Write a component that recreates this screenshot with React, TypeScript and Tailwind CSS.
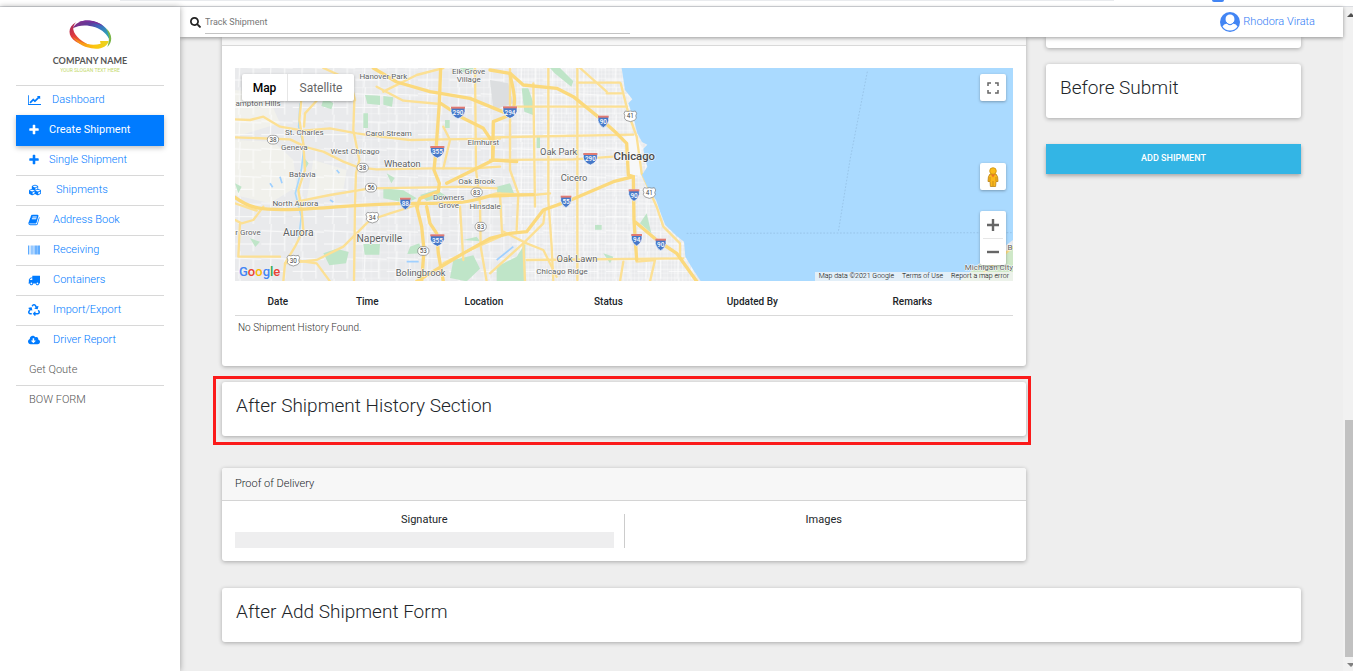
import type { ReactNode } from "react";
import { FaBarcode, FaCloudDownloadAlt, FaCubes, FaRecycle, FaSearch } from "react-icons/fa";

const PLUS =
  "M1600 736v192q0 40-28 68t-68 28h-416v416q0 40-28 68t-68 28h-192q-40 0-68-28t-28-68v-416h-416q-40 0-68-28t-28-68v-192q0-40 28-68t68-28h416v-416q0-40 28-68t68-28h192q40 0 68 28t28 68v416h416q40 0 68 28t28 68z";
const CHART =
  "M2048 1536v128h-2048v-1536h128v1408h1920zm-128-1248v435q0 21-19.5 29.5t-35.5-7.5l-121-121-633 633q-10 10-23 10t-23-10l-233-233-416 416-192-192 585-585q10-10 23-10t23 10l233 233 464-464-121-121q-16-16-7.5-35.5t29.5-19.5h435q14 0 23 9t9 23z";
const TRUCK =
  "M640 1408q0-52-38-90t-90-38-90 38-38 90 38 90 90 38 90-38 38-90zm-384-512h384v-256h-158q-13 0-22 9l-195 195q-9 9-9 22v30zm1280 512q0-52-38-90t-90-38-90 38-38 90 38 90 90 38 90-38 38-90zm256-1088v1024q0 15-4 26.5t-13.5 18.5-16.5 11.5-23.5 6-22.5 2-25.5 0-22.5-.5q0 106-75 181t-181 75-181-75-75-181h-384q0 106-75 181t-181 75-181-75-75-181h-64q-3 0-22.5.5t-25.5 0-22.5-2-23.5-6-16.5-11.5-13.5-18.5-4-26.5q0-26 19-45t45-19v-320q0-8-.5-35t0-38 2.5-34.5 6.5-37 14-30.5 22.5-30l198-198q19-19 50.5-32t58.5-13h160v-192q0-26 19-45t45-19h1024q26 0 45 19t19 45z";
const BOOK =
  "M1703 478q40 57 18 129l-275 906q-19 64-76.5 107.5t-122.5 43.5h-923q-77 0-148.5-53.5t-99.5-131.5q-24-67-2-127 0-4 3-27t4-37q1-8-3-21.5t-3-19.5q2-11 8-21t16.5-23.5 16.5-23.5q23-38 45-91.5t30-91.5q3-10 .5-30t-.5-28q3-11 17-28t17-23q21-36 42-92t25-90q1-9-2.5-32t.5-28q4-13 22-30.5t22-22.5q19-26 42.5-84.5t27.5-96.5q1-8-3-25.5t-2-26.5q2-8 9-18t18-23 17-21q8-12 16.5-30.5t15-35 16-36 19.5-32 26.5-23.5 36-11.5 47.5 5.5l-1 3q38-9 51-9h761q74 0 114 56t18 130l-274 906q-36 119-71.5 153.5t-128.5 34.5h-869q-27 0-38 15-11 16-1 43 24 70 144 70h923q29 0 56-15.5t35-41.5l300-987q7-22 5-57 38 15 59 43zm-1064 2q-4 13 2 22.5t20 9.5h608q13 0 25.5-9.5t16.5-22.5l21-64q4-13-2-22.5t-20-9.5h-608q-13 0-25.5 9.5t-16.5 22.5zm-83 256q-4 13 2 22.5t20 9.5h608q13 0 25.5-9.5t16.5-22.5l21-64q4-13-2-22.5t-20-9.5h-608q-13 0-25.5 9.5t-16.5 22.5z";

function Glyph({ d, wide }: { d: string; wide?: boolean }) {
  return (
    <svg viewBox={wide ? "0 0 2048 1792" : "0 0 1792 1792"} className={wide ? "h-3 w-[13px]" : "size-3"} fill="currentColor" aria-hidden="true">
      <path d={d} />
    </svg>
  );
}

type NavItem = { label: string; icon?: ReactNode; gap?: string; active?: boolean; line?: boolean };

const NAV: NavItem[] = [
  { label: "Dashboard", icon: <Glyph d={CHART} wide />, gap: "gap-[10px]" },
  { label: "Create Shipment", icon: <Glyph d={PLUS} />, gap: "gap-2", active: true },
  { label: "Single Shipment", icon: <Glyph d={PLUS} />, gap: "gap-2", line: true },
  { label: "Shipments", icon: <FaCubes className="h-3 w-[14px]" />, gap: "gap-[13px]", line: true },
  { label: "Address Book", icon: <Glyph d={BOOK} />, gap: "gap-3", line: true },
  { label: "Receiving", icon: <FaBarcode className="size-3" />, gap: "gap-3", line: true },
  { label: "Containers", icon: <Glyph d={TRUCK} />, gap: "gap-3", line: true },
  { label: "Import/Export", icon: <FaRecycle className="size-3" />, gap: "gap-3", line: true },
  { label: "Driver Report", icon: <FaCloudDownloadAlt className="size-3" />, gap: "gap-3" },
  { label: "Get Qoute", line: true },
  { label: "BOW FORM" },
];

function Logo() {
  return (
    <div className="flex flex-col items-center pt-3">
      <svg viewBox="68 10 132 93" className="h-[31px] w-11" aria-hidden="true">
        <defs>
          <linearGradient id="top" x1="0" x2="1" y2=".5">
            <stop offset="0" stopColor="#8e2a7c" />
            <stop offset=".45" stopColor="#5b3d9e" />
            <stop offset=".7" stopColor="#3a6fc0" />
            <stop offset="1" stopColor="#2f9fb4" />
          </linearGradient>
          <linearGradient id="left" x1="0" x2=".6" y2="1">
            <stop offset="0" stopColor="#9c2560" />
            <stop offset=".5" stopColor="#e03a3e" />
            <stop offset="1" stopColor="#f47b20" />
          </linearGradient>
          <linearGradient id="bottom" x1="0" x2="1">
            <stop offset="0" stopColor="#f47b20" />
            <stop offset=".6" stopColor="#fdc50f" />
            <stop offset="1" stopColor="#e8d520" />
          </linearGradient>
        </defs>
        <path d="M82 38C94 14 130 8 160 22C184 33 197 54 194 76C186 56 170 42 150 35C124 26 100 28 82 38z" fill="url(#top)" />
        <path d="M98 20C124 10 156 14 176 34C152 20 128 18 98 20z" fill="#7a2f9a" />
        <path d="M182 38C200 52 204 78 186 94C192 76 194 58 182 38z" fill="#7ab648" />
        <path d="M92 20C66 34 66 62 92 78C106 87 122 91 138 90C112 80 88 62 84 42C83 34 86 27 92 20z" fill="url(#left)" />
        <path d="M82 62C104 84 138 92 166 84L164 76L190 76C186 94 164 103 138 98C112 94 92 80 82 62z" fill="url(#bottom)" />
      </svg>
      <p className="mt-[5px] text-center font-[Lato,sans-serif] text-[9px] leading-3 font-bold text-[#555]">COMPANY NAME</p>
      <p className="text-center text-[5px] leading-[6px] text-[#c3d96a]">YOUR SLOGAN TEXT HERE</p>
    </div>
  );
}

function Sidebar() {
  return (
    <aside className="relative z-20 w-[180px] shrink-0 bg-white px-4 shadow-[0_0_6px_rgba(0,0,0,0.35)]">
      <div className="h-[78px]">
        <Logo />
      </div>
      <nav className="border-t border-[#d8d8d8]">
        {NAV.map((n) => (
          <a
            key={n.label}
            href="#"
            className={
              "flex items-center pb-[2px] pl-3 text-[11px] leading-4 " +
              (n.gap ?? "") +
              (n.active
                ? " h-[31px] bg-[#007bff] text-white shadow-[0_2px_5px_rgba(0,0,0,0.25)]"
                : n.label === "Dashboard"
                  ? " h-[29px] font-light text-[#007bff]"
                  : n.icon
                    ? " h-[30px] font-light text-[#007bff]"
                    : " h-[30px] font-light text-[#555]") +
              (n.line ? " border-b border-[#d8d8d8]" : "")
            }
          >
            {n.icon}
            <span className={n.icon ? "pl-px" : "pl-px"}>{n.label}</span>
          </a>
        ))}
      </nav>
    </aside>
  );
}

const MAJOR = [
  "M632 24L628 130 618 270 612 330 628 370 625 395 570 415 562 440",
  "M590 440L600 490 620 520 625 580 640 664",
  "M15 412C60 445 90 452 200 448S400 430 560 430 720 424 780 408L910 404",
  "M430 24L500 66 600 95 720 115 830 160",
  "M632 130L700 175 760 205 790 250 788 300 860 305",
  "M780 30L840 40 880 75 980 85 1030 110 1110 175 1160 220 1190 250 1195 345 1210 350",
  "M1210 350L1150 365 1010 425 940 450 890 515 840 520 780 535 700 580 560 664",
  "M1210 350L1212 480 1220 600M1215 485L1280 540 1340 580 1400 664",
  "M840 165L790 185 788 300M840 165C870 130 840 60 840 40",
  "M560 440L575 500 582 570 575 664M650 370L730 330 790 300",
];
const MINOR = [
  "M15 178L60 180 100 170 150 200 220 212 300 205 380 220 450 230 540 240 640 238 810 236",
  "M15 232L180 238 230 262 280 275 340 305 385 322 440 328 600 325 730 325 810 320",
  "M215 110L208 180 220 250 225 330 205 390 215 450 220 510 195 560 165 610 160 664",
  "M262 120L225 160 222 200M15 430L80 452",
  "M373 120L370 210 388 300 378 340 375 430 372 664",
  "M440 80L520 122 630 132M460 95L560 45 640 24M280 24L360 60 375 120",
  "M735 24L738 330 750 430 752 560 770 664",
  "M200 425L300 405 420 385 600 382 700 380 800 385",
  "M165 610L260 600 340 560 400 500 420 480 480 460 560 435",
  "M640 610L720 570 810 530M15 480L35 490 70 480 100 440M30 490L25 590 150 590M190 600L260 610 300 664",
  "M955 24V420L965 560 970 664M1042 24V660M910 70L915 440",
  "M860 140H1190M780 232L1210 224M1042 68H1170M1130 100H1175M1050 24L1130 95",
  "M780 300L1030 298 1150 290M730 420L800 400 910 405 960 400",
  "M1172 70L1195 160 1220 230 1235 340 1280 440 1300 500 1350 550 1350 590",
  "M890 600L1360 595M840 24V330L865 400 860 510",
  "M820 515L890 550 940 570 980 650M780 640L880 550 940 490 945 450",
  "M880 550L885 664M1180 605L1170 664M1220 605L1275 600 1260 664",
  "M810 400L816 520M690 440L700 600M640 325L660 240 640 200",
];
const PARKS = [
  "M405 105l45 2 0 28 -38 -4zM460 108l30 4 -4 28 -26 -6zM400 160h14v44h-14zM282 112l28 18 -6 18 -30 -10z",
  "M280 580l40 -14 36 10 -8 34 -50 6zM400 552h50l-2 32h-44zM540 560l28 -10 8 30 -44 2z",
  "M670 600l60 -14 20 40 -40 38 -50 -10zM700 540l40 -10 10 14zM460 385l60 6 40 24 -30 14 -70 -14z",
  "M570 405l50 -16 30 20 -60 14zM875 85h20l14 40 0 40 -26 -10zM960 24l30 0 40 40 -6 16 -50 -40z",
  "M800 380l40 -10 12 30 -50 0zM800 620l60 -30 26 -40 0 114h-86zM1230 490l20 -30 14 60z",
  "M645 180l14 0 0 24 -14 0zM690 24h40v12h-36zM470 340l24 14 -10 16zM15 370l20 10 -10 20zM920 230h10v34h-10zM220 290l16 20 -14 24zM1120 580l30 10 -10 20zM60 535l30 10 -14 16zM1095 495h20v14h-20z",
];
type MapLabel = [string, number, number, number];
const LABELS: MapLabel[] = [
  ["Hanover Park", 460, 58, 24],
  ["Elk Grove", 716, 43, 24],
  ["Village", 716, 65, 24],
  ["ampton Hills", 84, 138, 24],
  ["St. Charles", 223, 224, 24],
  ["Carol Stream", 476, 228, 24],
  ["Elmhurst", 760, 255, 24],
  ["Geneva", 193, 269, 24],
  ["West Chicago", 375, 283, 24],
  ["Wheaton", 517, 320, 28],
  ["Batavia", 217, 351, 24],
  ["Oak Brook", 740, 371, 24],
  ["Downers", 656, 419, 24],
  ["Grove", 656, 443, 24],
  ["Hinsdale", 765, 447, 24],
  ["North Aurora", 196, 438, 24],
  ["r Grove", 54, 526, 24],
  ["Aurora", 205, 529, 31],
  ["Naperville", 448, 547, 31],
  ["Bolingbrook", 572, 648, 28],
  ["Oak Park", 986, 284, 28],
  ["Cicero", 1032, 362, 28],
  ["Oak Lawn", 1041, 607, 28],
  ["Chicago Ridge", 996, 642, 24],
  ["Michigan City", 2277, 630, 24],
  ["B", 2340, 570, 24],
];
type Sign = [string, number, number];
const INTERSTATES: Sign[] = [
  ["290", 684, 157],
  ["355", 622, 275],
  ["88", 526, 430],
  ["355", 622, 540],
  ["294", 840, 156],
  ["90", 1120, 184],
  ["290", 1081, 296],
  ["55", 1008, 424],
  ["90", 1212, 405],
  ["94", 1220, 539],
  ["90", 1292, 553],
];
const ROUTES: Sign[] = [
  ["38", 129, 239],
  ["38", 398, 323],
  ["56", 423, 383],
  ["83", 740, 397],
  ["83", 752, 500],
  ["53", 580, 573],
];
const US_ROUTES: Sign[] = [
  ["34", 427, 472],
  ["30", 190, 601],
  ["41", 1201, 168],
  ["41", 1258, 398],
];

function MapDrawing() {
  return (
    <svg viewBox="15 24 2334 639" preserveAspectRatio="xMidYMid slice" className="absolute inset-0 size-full font-[Roboto,sans-serif]" role="img" aria-label="Map of Chicago">
      <defs>
        <pattern id="streets" width="26" height="26" patternUnits="userSpaceOnUse">
          <path d="M0 5H26M8 0V26" stroke="#fff" strokeWidth="2" opacity=".7" fill="none" />
        </pattern>
        <pattern id="blocks" width="94" height="82" patternUnits="userSpaceOnUse">
          <path d="M0 20L94 24M30 0L26 82M70 24V82M0 60H70" stroke="#fff" strokeWidth="3" opacity=".8" fill="none" />
        </pattern>
        <pattern id="dense" width="11" height="13" patternUnits="userSpaceOnUse">
          <path d="M0 3H11M4 0V13" stroke="#fff" strokeWidth="2" opacity=".45" fill="none" />
        </pattern>
      </defs>
      <rect x="15" y="24" width="2334" height="639" fill="#e9eaec" />
      <path d="M15 240L130 245 190 300 200 380 120 430 15 405zM15 90L110 100 150 190 15 230zM250 300L350 330 340 390 230 420z" fill="#f1f1ec" />
      <rect x="15" y="24" width="1500" height="639" fill="url(#blocks)" />
      <rect x="370" y="24" width="1030" height="639" fill="url(#streets)" opacity=".6" />
      <rect x="860" y="24" width="540" height="639" fill="url(#dense)" />
      <path d="M1180 230L1215 225 1235 260 1230 345 1200 345z" fill="#f7f8f9" />
      <path d="M780 60L835 70 850 130 790 150z" fill="#dcdee0" />
      {PARKS.map((d) => (
        <path key={d} d={d} fill="#bfe5c8" />
      ))}
      <path d="M210 130L206 200 222 260 214 330 196 400 214 470 205 540" stroke="#a9d9fb" strokeWidth="5" fill="none" />
      <path d="M800 600L850 560M120 370l8 12M300 420l10 6M530 605h36M320 330l8 10M150 350l6 20" stroke="#9fd0ff" strokeWidth="5" fill="none" />
      <g fill="none" stroke="#fce094" strokeLinejoin="round" strokeLinecap="round">
        {MINOR.map((d) => (
          <path key={d} d={d} strokeWidth="7" />
        ))}
        {MAJOR.map((d) => (
          <path key={d} d={d} strokeWidth="10" stroke="#fbd97c" />
        ))}
      </g>
      <path
        d="M1175 24L1185 90 1207 118 1195 130 1212 180 1222 220 1236 246 1252 254 1240 266 1246 300 1252 320 1236 345 1252 380 1278 420 1292 460 1306 495 1340 528 1362 545 1366 590 1390 630 1412 663H2190L2250 608 2320 562 2349 540V24z"
        fill="#aadaff"
      />
      <path d="M2190 663L2250 612 2320 580 2349 560V663z" fill="#cfe8c8" />
      <path d="M2260 640L2320 585 2349 560" stroke="#fbdd86" strokeWidth="7" fill="none" />
      <g stroke="#8fb9de" strokeWidth="2" fill="none" strokeDasharray="5 5">
        <path d="M1370 520L2349 518" />
        <path d="M1912 35L1860 300 1825 515" />
      </g>
      {INTERSTATES.map(([n, x, y], i) => {
        const w = n.length === 3 ? 21 : 16;
        return (
          <g key={i} transform={`translate(${x} ${y})`}>
            <path d={`M${-w} -16H${w}V-2Q${w - 3} 12 0 19Q${3 - w} 12 ${-w} -2z`} fill="#4678c8" stroke="#fff" strokeWidth="2" />
            <path d={`M${-w} -17H${w}V-11H${-w}z`} fill="#e07a72" />
            <text y="8" textAnchor="middle" fontSize="19" fontWeight="500" fill="#fff">{n}</text>
          </g>
        );
      })}
      {ROUTES.map(([n, x, y], i) => (
        <g key={i} transform={`translate(${x} ${y})`}>
          <rect x="-17" y="-13" width="34" height="26" rx="13" fill="#fff" stroke="#777" strokeWidth="2" />
          <text y="7" textAnchor="middle" fontSize="19" fill="#444">{n}</text>
        </g>
      ))}
      {US_ROUTES.map(([n, x, y], i) => (
        <g key={i} transform={`translate(${x} ${y})`}>
          <path d="M-15 -15Q-8 -12 0 -15Q8 -12 15 -15L19 -8Q14 0 18 6Q17 14 0 17Q-17 14 -18 6Q-14 0 -19 -8z" fill="#fff" stroke="#777" strokeWidth="2" />
          <text y="7" textAnchor="middle" fontSize="19" fill="#444">{n}</text>
        </g>
      ))}
      <g textAnchor="middle" fill="#5c5f62" stroke="#fff" strokeWidth="3" paintOrder="stroke" strokeLinejoin="round">
        {LABELS.map(([t, x, y, s]) => (
          <text key={t} x={x} y={y} fontSize={s}>{t}</text>
        ))}
        <text x="1213" y="300" fontSize="34" fontWeight="500" fill="#4a4a4a">Chicago</text>
      </g>
    </svg>
  );
}

function MapPanel() {
  return (
    <div className="relative h-[213px] overflow-hidden">
      <MapDrawing />
      <div className="absolute top-[6px] left-[7px] flex h-[27px] divide-x divide-[#e6e6e6] rounded-xs bg-white text-[12px] shadow-[0_1px_3px_rgba(0,0,0,0.3)]">
        <button className="w-[46px] font-medium text-black">Map</button>
        <button className="w-[66px] font-normal text-[#666]">Satellite</button>
      </div>
      <div className="absolute top-[6px] right-[7px] flex flex-col">
        <button aria-label="Toggle fullscreen" className="flex h-[27px] w-[26px] items-center justify-center rounded-xs bg-white shadow-[0_1px_3px_rgba(0,0,0,0.3)]">
          <svg viewBox="0 0 12 12" className="size-3" fill="none" stroke="#666" strokeWidth="1.500">
            <path d="M1 4V1h3M8 1h3v3M11 8v3H8M4 11H1V8" />
          </svg>
        </button>
        <button aria-label="Street View" className="mt-[62px] flex h-[27px] w-[26px] items-center justify-center rounded-xs bg-white shadow-[0_1px_3px_rgba(0,0,0,0.3)]">
          <svg viewBox="0 0 12 20" className="h-5 w-3">
            <path d="M3 7Q.800 9 1 14.500H3L3.400 19.500H8.600L9 14.500H11Q11.200 9 9 7z" fill="#fbb81c" stroke="#b98218" strokeWidth=".8" />
            <circle cx="6" cy="4" r="3.300" fill="#fbbc1a" stroke="#c98f12" strokeWidth=".8" />
            <path d="M4 7.500h4L6 10.500z" fill="#e8742a" />
            <path d="M6 14v5M3 10v4M9 10v4" stroke="#b98218" strokeWidth=".7" />
          </svg>
        </button>
        <div className="mt-[21px] flex w-[26px] flex-col items-center rounded-xs bg-white shadow-[0_1px_3px_rgba(0,0,0,0.3)]">
          <button aria-label="Zoom in" className="flex h-[27px] w-full items-center justify-center">
            <svg viewBox="0 0 12 12" className="size-3" stroke="#666" strokeWidth="2.400">
              <path d="M0 6h12M6 0v12" />
            </svg>
          </button>
          <span className="h-px w-5 bg-[#e6e6e6]" />
          <button aria-label="Zoom out" className="flex h-[26px] w-full items-center justify-center">
            <svg viewBox="0 0 12 12" className="size-3" stroke="#666" strokeWidth="2.400">
              <path d="M0 6h12" />
            </svg>
          </button>
        </div>
      </div>
      <p className="absolute bottom-0 left-[4px] text-[13px] leading-[18px] font-medium" aria-label="Google">
        <span className="text-[#4285f4]">G</span>
        <span className="text-[#ea4335]">o</span>
        <span className="text-[#fbbc05]">o</span>
        <span className="text-[#4285f4]">g</span>
        <span className="text-[#34a853]">l</span>
        <span className="text-[#ea4335]">e</span>
      </p>
      <p className="absolute right-0 bottom-0 flex h-[9px] items-center gap-2 bg-[#f5f5f5]/75 px-1 text-[7px] leading-[9px] font-light text-black">
        <span>Map data ©2021 Google</span>
        <a href="#">Terms of Use</a>
        <a href="#">Report a map error</a>
      </p>
    </div>
  );
}

const CARD = "rounded-[3px] bg-white shadow-[0_1px_4px_rgba(0,0,0,0.3)]";

function TitleCard({ title }: { title: string }) {
  return (
    <section className={CARD + " h-[54px] px-[14px] pt-3"}>
      <h2 className="text-[19px] leading-6 font-light text-[#212529]">{title}</h2>
    </section>
  );
}

function HistoryCard() {
  return (
    <section className={CARD + " rounded-t-none pb-[26px]"}>
      <div className="h-[9px] border-b border-[#d9d9d9] bg-[#f7f7f7]" />
      <div className="px-[13px] pt-[22px]">
        <MapPanel />
        <table className="w-full table-fixed text-[10px] leading-4">
          <colgroup>
            <col className="w-[11%]" />
            <col className="w-[12%]" />
            <col className="w-[18%]" />
            <col className="w-[14%]" />
            <col className="w-[23%]" />
            <col />
          </colgroup>
          <thead>
            <tr className="h-[34px] border-b border-[#d9d9d9] text-[#212529]">
              {["Date", "Time", "Location", "Status", "Updated By", "Remarks"].map((h) => (
                <th key={h} className="pb-[5px] align-bottom font-medium last:pr-[30px]">{h}</th>
              ))}
            </tr>
          </thead>
          <tbody>
            <tr>
              <td colSpan={6} className="px-[3px] py-1 font-light text-[#333]">No Shipment History Found.</td>
            </tr>
          </tbody>
        </table>
      </div>
    </section>
  );
}

function ProofCard() {
  return (
    <section className={CARD + " overflow-hidden"}>
      <h3 className="h-[33px] border-b border-[#d4d4d4] bg-[#f7f7f7] px-[13px] py-2 text-[11px] leading-4 font-light text-[#212529]">Proof of Delivery</h3>
      <div className="flex px-[13px] py-[13px] text-[11px] text-[#212529]">
        <div className="flex-1 border-r border-[#ccc] pr-[10px] text-center">
          <p className="leading-3">Signature</p>
          <div className="mt-[6px] h-4 bg-[#eeeeef]" />
        </div>
        <p className="flex-1 pl-[10px] text-center leading-3">Images</p>
      </div>
    </section>
  );
}

function Header() {
  return (
    <header className="relative z-10 flex h-[30px] items-center justify-between bg-white pr-7 pl-[10px] shadow-[0_1px_4px_rgba(0,0,0,0.4)]">
      <label className="flex items-center gap-1">
        <FaSearch className="size-[11px] text-[#222]" />
        <input
          aria-label="Track Shipment"
          placeholder="Track Shipment"
          className="h-[23px] w-[425px] border-b border-[#c4c4c4] bg-transparent text-[9px] outline-none placeholder:text-[#777]"
        />
      </label>
      <a href="#" className="flex items-center gap-[3px] text-[11px] font-light text-[#2f7bf5]">
        <svg viewBox="0 0 20 20" className="size-5" aria-hidden="true">
          <circle cx="10" cy="10" r="10" fill="#4285f4" />
          <path d="M2.500 14.500Q3.500 12 7 11.500Q10 13.800 13 11.500Q16.500 12 17.500 14.500Q15 18.600 10 18.600T2.500 14.500z" fill="#fff" />
          <rect x="5.600" y="2.500" width="8.800" height="9.500" rx="4.200" fill="#fff" />
          <path d="M6 10Q7.500 12.800 10 12.800T14 10" fill="none" stroke="#4285f4" strokeWidth="1" />
        </svg>
        Rhodora Virata
      </a>
    </header>
  );
}

export default function App() {
  return (
    <div className="flex min-h-screen flex-col bg-white font-[Roboto,sans-serif] text-[#212529]">
      <div className="flex h-[7px] shrink-0 items-start border-b border-[#dadce0]">
        <span className="ml-[120px] h-px flex-1 bg-[#e9ebee]" />
        <span className="mr-[129px] ml-[98px] h-[2px] w-3 rounded-b-sm bg-[#4285f4]" />
      </div>
      <div className="flex flex-1">
        <Sidebar />
        <div className="flex min-w-0 flex-1 flex-col bg-[#eee]">
          <Header />
          <main className="px-[42px] pb-7">
            <div className="flex gap-5">
              <div className="min-w-0 flex-1">
                <HistoryCard />
                <div className="relative mt-4">
                  <TitleCard title="After Shipment History Section" />
                  <div className="pointer-events-none absolute -top-[6px] -right-[5px] -bottom-[9px] -left-[9px] border-[3px] border-[#fb1a1a]" />
                </div>
                <div className="mt-8">
                  <ProofCard />
                </div>
              </div>
              <div className="w-[255px] shrink-0">
                <div className={CARD + " h-[11px] rounded-t-none"} />
                <div className="mt-4">
                  <TitleCard title="Before Submit" />
                </div>
                <button className="mt-[26px] h-[30px] w-full bg-[#33b5e5] text-[9px] font-medium text-white shadow-[0_2px_4px_rgba(0,0,0,0.3)]">
                  ADD SHIPMENT
                </button>
              </div>
            </div>
            <div className="mt-[27px]">
              <TitleCard title="After Add Shipment Form" />
            </div>
          </main>
        </div>
        <div className="flex w-[10px] shrink-0 flex-col items-end bg-[#f1f1f1]" aria-hidden="true">
          <svg viewBox="0 0 8 14" className="h-[14px] w-2">
            <path d="M2 10L6 6 10 10z" fill="#505050" />
          </svg>
          <span className="flex-[399]" />
          <span className="w-2 flex-[237] bg-[#c1c1c1]" />
          <svg viewBox="0 0 8 14" className="h-[14px] w-2">
            <path d="M2 6L6 10 10 6z" fill="#808080" />
          </svg>
        </div>
      </div>
    </div>
  );
}
